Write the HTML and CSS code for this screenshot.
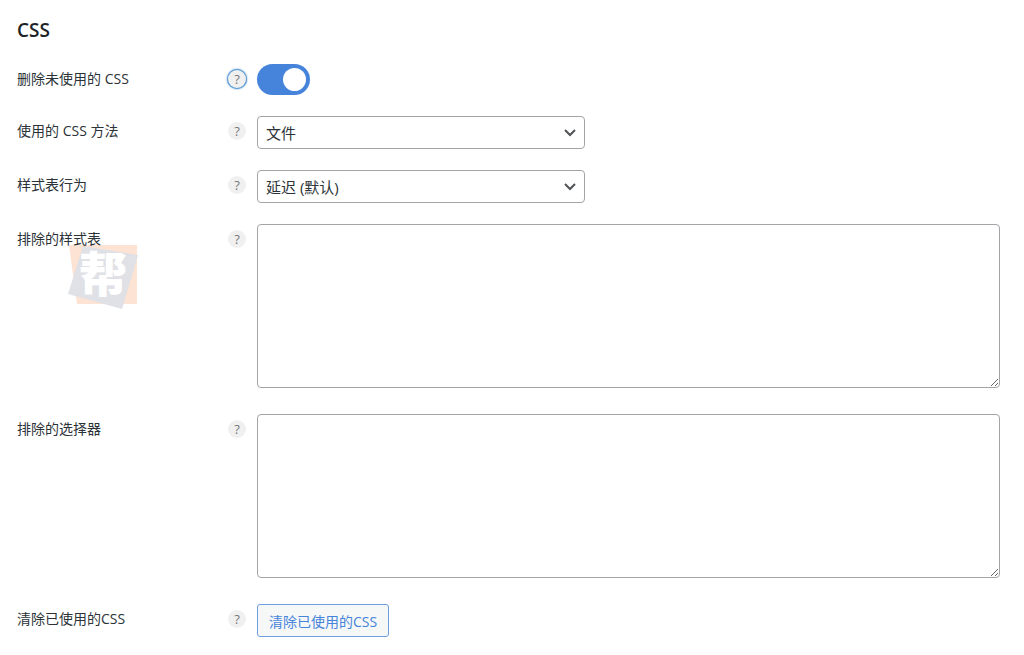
FILE: index.html
```html
<!DOCTYPE html>
<html lang="zh-CN">
<head>
    <meta charset="UTF-8">
    <meta name="viewport" content="width=device-width, initial-scale=1.0">
    <title>CSS</title>
    <link rel="stylesheet" href="styles.css">
</head>
<body>
    <form class="settings">
        <h2>CSS</h2>

        <div class="row">
            <label for="removeUnused">删除未使用的 CSS</label>
            <button type="button" class="help active">?</button>
            <input type="checkbox" id="removeUnused" class="toggle" checked>
        </div>

        <div class="row">
            <label for="cssMethod">使用的 CSS 方法</label>
            <button type="button" class="help">?</button>
            <select id="cssMethod">
                <option>文件</option>
            </select>
        </div>

        <div class="row">
            <label for="behavior">样式表行为</label>
            <button type="button" class="help">?</button>
            <select id="behavior">
                <option>延迟 (默认)</option>
            </select>
        </div>

        <div class="row area">
            <div class="label-cell">
                <svg class="watermark" width="70" height="66" viewBox="0 0 70 66" aria-hidden="true">
                    <path fill="#fce3d3" d="M1 1H69V60H9Z"/>
                    <path fill="#dfe1e6" d="M15 2L70 11L54 65L0 50Z"/>
                    <text x="35" y="48" text-anchor="middle">帮</text>
                </svg>
                <label for="excludedSheets">排除的样式表</label>
            </div>
            <button type="button" class="help">?</button>
            <textarea id="excludedSheets"></textarea>
        </div>

        <div class="row area">
            <label for="excludedSelectors">排除的选择器</label>
            <button type="button" class="help">?</button>
            <textarea id="excludedSelectors"></textarea>
        </div>

        <div class="row">
            <label for="clearCss">清除已使用的CSS</label>
            <button type="button" class="help">?</button>
            <button type="button" id="clearCss" class="clear">清除已使用的CSS</button>
        </div>
    </form>
</body>
</html>
```
FILE: styles.css
```css
* {
    box-sizing: border-box;
}
body {
    margin: 0;
    background: #fff;
    color: #2c3338;
    font-family: "Open Sans", "Noto Sans CJK SC", sans-serif;
    font-size: 14px;
}
.settings {
    padding: 16px 24px 0 17px;
}
h2 {
    margin: 0 0 20px;
    color: #1d2327;
    font-size: 19px;
    line-height: 28px;
    font-weight: 600;
}
.row {
    display: grid;
    grid-template-columns: 200px 18px 1fr;
    column-gap: 11px;
    align-items: start;
    justify-items: start;
    margin-bottom: 21px;
}
.row.area {
    margin-bottom: 26px;
}
.row:last-child {
    margin-bottom: 0;
}
label {
    display: block;
    line-height: 30px;
}
.label-cell {
    position: relative;
}
.label-cell label {
    position: relative;
}
.watermark {
    position: absolute;
    top: 20px;
    left: 51px;
}
.watermark text {
    fill: #fff;
    font-family: "Noto Sans CJK SC", sans-serif;
    font-size: 48px;
    font-weight: 900;
}
.help {
    width: 18px;
    height: 18px;
    margin-top: 6px;
    padding: 0;
    border: none;
    border-radius: 50%;
    background: #f0f0f0;
    color: #777;
    font-family: inherit;
    font-size: 13px;
    line-height: 18px;
    text-align: center;
    cursor: pointer;
}
.help.active {
    box-shadow: 0 0 0 1px #5b9bd5, 0 0 2px 1px #4f94d4;
}
.toggle {
    appearance: none;
    width: 53px;
    height: 31px;
    margin: 0;
    padding: 4px;
    border-radius: 16px;
    background: #a7aaad;
    cursor: pointer;
}
.toggle::before {
    content: "";
    display: block;
    width: 23px;
    height: 23px;
    border-radius: 50%;
    background: #fff;
}
.toggle:checked {
    background: #4584da;
}
.toggle:checked::before {
    margin-left: 22px;
}
select,
textarea {
    border: 1px solid #a2a4a7;
    border-radius: 4px;
    background-color: #fff;
    color: #2c3338;
    font-family: inherit;
    font-size: 15px;
}
select {
    appearance: none;
    width: 328px;
    max-width: 100%;
    height: 33px;
    padding: 0 28px 0 8px;
    background-image: url("data:image/svg+xml,%3Csvg xmlns='http://www.w3.org/2000/svg' viewBox='0 0 12 8'%3E%3Cpath d='M1 1l5 5 5-5' fill='none' stroke='%23505357' stroke-width='2'/%3E%3C/svg%3E");
    background-repeat: no-repeat;
    background-position: right 8px center;
    background-size: 12px 8px;
}
textarea {
    display: block;
    width: 100%;
    height: 164px;
    padding: 8px;
    resize: both;
}
.clear {
    height: 33px;
    padding: 0 11px;
    border: 1px solid #6d9fdf;
    border-radius: 3px;
    background: #f6f7f7;
    color: #4584da;
    font-family: inherit;
    font-size: 14px;
    cursor: pointer;
}
```
